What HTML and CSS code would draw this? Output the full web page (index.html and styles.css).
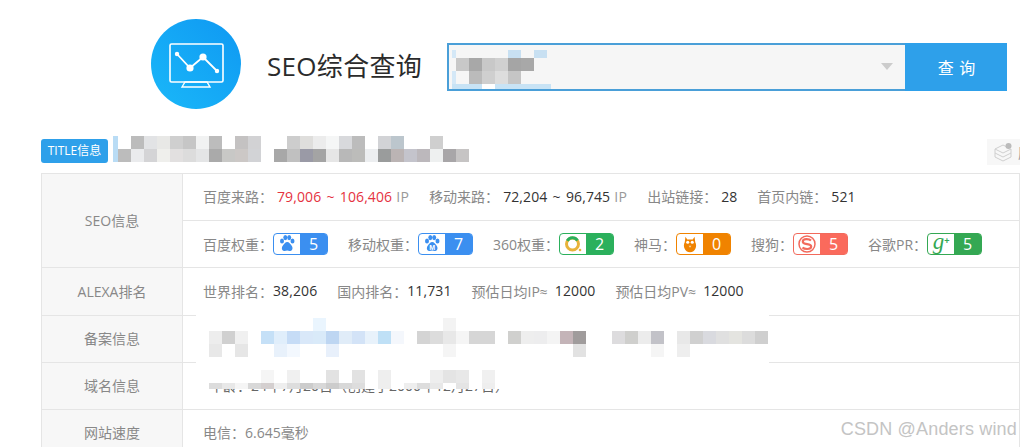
FILE: index.html
```html
<!DOCTYPE html>
<html lang="zh-CN">
<head>
<meta charset="utf-8">
<title>SEO综合查询</title>
<link rel="stylesheet" href="styles.css">
</head>
<body>
<div class="page">
  <header class="head">
    <svg class="logo" width="90" height="90" viewBox="151 19 90 90">
      <defs>
        <linearGradient id="lg" x1="0" y1="1" x2="1" y2="0">
          <stop offset="0" stop-color="#1ab8f9"/>
          <stop offset="1" stop-color="#0f98f2"/>
        </linearGradient>
      </defs>
      <circle cx="196" cy="64" r="45" fill="url(#lg)"/>
      <rect x="170" y="44" width="53" height="38" rx="1.5" fill="none" stroke="#fff" stroke-width="1.6"/>
      <path d="M182 87l3-5h22l3 5z" fill="none" stroke="#fff" stroke-width="1.4"/>
      <path d="M177 54l13 14 13-11 14 14" fill="none" stroke="#fff" stroke-width="1.8"/>
      <circle cx="177" cy="54" r="2.2" fill="#fff"/>
      <circle cx="190" cy="68" r="3.6" fill="#fff"/>
      <circle cx="203" cy="57" r="3.6" fill="#fff"/>
      <circle cx="217" cy="71" r="2.2" fill="#fff"/>
    </svg>
    <h1 class="brand">SEO综合查询</h1>
    <div class="search">
      <div class="search-input"><span class="caret"></span></div>
      <div class="search-btn">查 询</div>
    </div>
  </header>

  <div class="title-row">
    <span class="title-tag">TITLE信息</span>
    <div class="history">
      <svg width="20" height="20" viewBox="0 0 20 20" fill="none" stroke="#cfcfcf" stroke-width="1">
        <path d="M2 7l8-4 6 3M2 7l8 4 8-4M2 11l8 4 8-4M2 15l8 4 8-4M2 7v8M18 7v8"/>
        <circle cx="15.5" cy="4" r="3" fill="#bbb" stroke="none"/>
      </svg>
      <span class="history-text">历史查询</span>
    </div>
  </div>

  <table class="info">
    <colgroup><col class="col-label"><col></colgroup>
    <tr class="r47">
      <th rowspan="2">SEO信息</th>
      <td>
        <div class="line lift">
          <span class="item"><span class="k">百度来路：</span><b class="red">79,006 ~ 106,406</b><span class="ip">IP</span></span>
          <span class="item"><span class="k">移动来路：</span><b>72,204 ~ 96,745</b><span class="ip">IP</span></span>
          <span class="item"><span class="k">出站链接：</span><b>28</b></span>
          <span class="item"><span class="k">首页内链：</span><b>521</b></span>
        </div>
      </td>
    </tr>
    <tr class="r47">
      <td>
        <div class="line">
          <span class="item"><span class="k2">百度权重：</span>
            <span class="rank baidu wide"><span class="ico">
              <svg width="20" height="20" viewBox="0 0 20 20"><g fill="#3b8ff0"><ellipse cx="5" cy="7" rx="2" ry="2.6"/><ellipse cx="8.3" cy="3.6" rx="2" ry="2.6"/><ellipse cx="12.2" cy="3.6" rx="2" ry="2.6"/><ellipse cx="15.5" cy="7" rx="2" ry="2.6"/><path d="M10.2 8c-2 0-3 2-4.300 3.500-1.500 1.800-1.500 5 1.300 5.500 1.200.2 2-.4 3-.4s1.800.6 3 .4c2.800-.5 2.800-3.700 1.300-5.500C13.200 10 12.200 8 10.200 8z"/></g></svg>
            </span><span class="num">5</span></span>
          </span>
          <span class="item"><span class="k2">移动权重：</span>
            <span class="rank baidu wide"><span class="ico">
              <svg width="20" height="20" viewBox="0 0 20 20"><g fill="#3b8ff0"><ellipse cx="5" cy="7" rx="2" ry="2.6"/><ellipse cx="8.3" cy="3.6" rx="2" ry="2.6"/><ellipse cx="12.2" cy="3.6" rx="2" ry="2.6"/><ellipse cx="15.5" cy="7" rx="2" ry="2.6"/><path d="M10.2 8c-2 0-3 2-4.300 3.500-1.500 1.800-1.500 5 1.300 5.500 1.200.2 2-.4 3-.4s1.800.6 3 .4c2.800-.5 2.800-3.700 1.300-5.500C13.200 10 12.200 8 10.200 8z"/></g><text x="10.200" y="15.500" class="m-mark">M</text></svg>
            </span><span class="num">7</span></span>
          </span>
          <span class="item"><span class="k2">360权重：</span>
            <span class="rank s360"><span class="ico">
              <svg width="20" height="20" viewBox="0 0 20 20"><circle cx="9.500" cy="10" r="6" fill="none" stroke="#e8b33a" stroke-width="3"/><path d="M4.300 6.800A6 6 0 0 1 14.500 6.500" fill="none" stroke="#2bb05c" stroke-width="3"/><circle cx="17" cy="16" r="1.300" fill="#e8b33a"/></svg>
            </span><span class="num">2</span></span>
          </span>
          <span class="item"><span class="k2">神马：</span>
            <span class="rank shenma"><span class="ico">
              <svg width="20" height="20" viewBox="0 0 20 22"><path d="M5 3l2 3h6l2-3 .8 6c1.200 2 1.200 5 .2 7-1 2.500-3 4-6 4s-5-1.500-6-4c-1-2-1-5 .2-7z" fill="#f08300"/><circle cx="7.500" cy="9" r="1.700" fill="#fff"/><circle cx="12.500" cy="9" r="1.700" fill="#fff"/><path d="M8.500 13h3l-1.500 2z" fill="#fbd9a8"/></svg>
            </span><span class="num">0</span></span>
          </span>
          <span class="item"><span class="k2">搜狗：</span>
            <span class="rank sogou"><span class="ico">
              <svg width="20" height="20" viewBox="0 0 20 20" fill="none" stroke="#f26a5c"><circle cx="10" cy="10" r="8" stroke-width="1.500"/><path d="M14 6.500c-1-1-2.500-1.300-4.500-1.300-2.300 0-3.700 1-3.700 2.500 0 3.500 8.400 1.500 8.400 4.800 0 1.600-1.500 2.500-4 2.500-2 0-3.800-.5-4.700-1.500" stroke-width="2.200"/></svg>
            </span><span class="num">5</span></span>
          </span>
          <span class="item"><span class="k2">谷歌PR：</span>
            <span class="rank google"><span class="ico"><span class="gplus">g</span><span class="gplus-mark">+</span></span><span class="num">5</span></span>
          </span>
        </div>
      </td>
    </tr>
    <tr class="r48">
      <th>ALEXA排名</th>
      <td>
        <div class="line lift">
          <span class="item"><span class="k2">世界排名：</span><b>38,206</b></span>
          <span class="item"><span class="k2">国内排名：</span><b>11,731</b></span>
          <span class="item"><span class="k3">预估日均IP≈</span><b>12000</b></span>
          <span class="item"><span class="k3">预估日均PV≈</span><b>12000</b></span>
        </div>
      </td>
    </tr>
    <tr class="r47">
      <th>备案信息</th>
      <td></td>
    </tr>
    <tr class="r47">
      <th>域名信息</th>
      <td><div class="line lift age">年龄：24年7月20日（创建于2000年12月27日）</div></td>
    </tr>
    <tr class="r47">
      <th>网站速度</th>
      <td><div class="line lift">电信：6.645毫秒</div></td>
    </tr>
  </table>

  <svg class="mosaic" width="1020" height="447" viewBox="0 0 1020 447" shape-rendering="crispEdges">
    <rect x="452" y="50" width="4" height="8" fill="#d4e8f7"/>
    <rect x="508" y="50" width="13" height="8" fill="#c8e0f2"/>
    <rect x="534" y="50" width="13" height="8" fill="#c8e0f2"/>
    <rect x="456" y="58" width="13" height="13" fill="#c8c8c8"/>
    <rect x="469" y="58" width="13" height="13" fill="#a8a8a8"/>
    <rect x="482" y="58" width="13" height="13" fill="#c8c8c8"/>
    <rect x="495" y="58" width="13" height="13" fill="#d0d0d0"/>
    <rect x="508" y="58" width="13" height="13" fill="#a5a5a5"/>
    <rect x="521" y="58" width="13" height="13" fill="#a8a8a8"/>
    <rect x="452" y="71" width="4" height="13" fill="#d4e8f7"/>
    <rect x="469" y="71" width="13" height="13" fill="#bbbbbb"/>
    <rect x="482" y="71" width="13" height="13" fill="#cfcfcf"/>
    <rect x="495" y="71" width="13" height="13" fill="#dddddd"/>
    <rect x="508" y="71" width="13" height="13" fill="#c5c5c5"/>
    <rect x="452" y="84" width="30" height="5" fill="#c8e3f5"/>
    <rect x="482" y="84" width="13" height="5" fill="#ffffff"/>
    <rect x="495" y="84" width="56" height="5" fill="#c8e3f5"/>

    <rect x="113" y="136" width="5" height="26" fill="#b9dcf5"/>
    <rect x="131" y="136" width="13" height="13" fill="#bcbcbc"/>
    <rect x="144" y="136" width="13" height="13" fill="#e2e3e5"/>
    <rect x="157" y="136" width="13" height="13" fill="#e8e8e6"/>
    <rect x="170" y="136" width="13" height="13" fill="#cfcfcf"/>
    <rect x="183" y="136" width="13" height="13" fill="#c6c6c6"/>
    <rect x="196" y="136" width="13" height="13" fill="#f1f2f2"/>
    <rect x="209" y="136" width="13" height="13" fill="#bcbcbc"/>
    <rect x="235" y="136" width="13" height="13" fill="#c4c2c2"/>
    <rect x="248" y="136" width="13" height="13" fill="#d2d2d4"/>
    <rect x="118" y="149" width="13" height="13" fill="#bcbcbc"/>
    <rect x="131" y="149" width="13" height="13" fill="#eaebed"/>
    <rect x="144" y="149" width="13" height="13" fill="#d4d4d6"/>
    <rect x="157" y="149" width="13" height="13" fill="#efefec"/>
    <rect x="170" y="149" width="13" height="13" fill="#e2e0e0"/>
    <rect x="183" y="149" width="13" height="13" fill="#dcdcdc"/>
    <rect x="196" y="149" width="13" height="13" fill="#e4e5e6"/>
    <rect x="209" y="149" width="13" height="13" fill="#aaaaaa"/>
    <rect x="222" y="149" width="13" height="13" fill="#c8c8c6"/>
    <rect x="235" y="149" width="13" height="13" fill="#ccc8c6"/>
    <rect x="248" y="149" width="13" height="13" fill="#d2d3d6"/>
    <rect x="287" y="136" width="13" height="13" fill="#cdcdcd"/>
    <rect x="300" y="136" width="13" height="13" fill="#dfdedc"/>
    <rect x="313" y="136" width="13" height="13" fill="#ececec"/>
    <rect x="326" y="136" width="13" height="13" fill="#f5f6f6"/>
    <rect x="339" y="136" width="13" height="13" fill="#d8d9dc"/>
    <rect x="352" y="136" width="13" height="13" fill="#bcbcbc"/>
    <rect x="378" y="136" width="13" height="13" fill="#d2d3d6"/>
    <rect x="391" y="136" width="13" height="13" fill="#bcc6cd"/>
    <rect x="430" y="136" width="13" height="13" fill="#cfcfcf"/>
    <rect x="274" y="149" width="13" height="13" fill="#a8a8a8"/>
    <rect x="287" y="149" width="13" height="13" fill="#c0c0c0"/>
    <rect x="300" y="149" width="13" height="13" fill="#9a9aa6"/>
    <rect x="313" y="149" width="13" height="13" fill="#a4a4a4"/>
    <rect x="326" y="149" width="13" height="13" fill="#e6e6e6"/>
    <rect x="339" y="149" width="13" height="13" fill="#b8b8b8"/>
    <rect x="352" y="149" width="13" height="13" fill="#bcbcba"/>
    <rect x="365" y="149" width="13" height="13" fill="#eceef0"/>
    <rect x="378" y="149" width="13" height="13" fill="#9a9c9c"/>
    <rect x="391" y="149" width="13" height="13" fill="#bbb4b4"/>
    <rect x="404" y="149" width="13" height="13" fill="#c4c4cc"/>
    <rect x="417" y="149" width="13" height="13" fill="#bcb8bc"/>
    <rect x="430" y="149" width="13" height="13" fill="#eef0f0"/>
    <rect x="443" y="149" width="13" height="13" fill="#a8a6a8"/>
    <rect x="456" y="149" width="13" height="13" fill="#c6c4c4"/>

    <rect x="196" y="314" width="573" height="75" fill="#ffffff"/>
    <rect x="313" y="318" width="13" height="13" fill="#eaf5fe"/>
    <rect x="443" y="318" width="13" height="13" fill="#f3f3f3"/>
    <rect x="209" y="331" width="13" height="13" fill="#ededed"/>
    <rect x="222" y="331" width="13" height="13" fill="#d0d0d0"/>
    <rect x="235" y="331" width="13" height="13" fill="#f0f0f0"/>
    <rect x="261" y="331" width="13" height="13" fill="#c5e0f7"/>
    <rect x="274" y="331" width="13" height="13" fill="#e0eefb"/>
    <rect x="287" y="331" width="13" height="13" fill="#c6dcf6"/>
    <rect x="300" y="331" width="13" height="13" fill="#d9e8f9"/>
    <rect x="313" y="331" width="13" height="13" fill="#d9eaf9"/>
    <rect x="326" y="331" width="13" height="13" fill="#bed6f2"/>
    <rect x="339" y="331" width="13" height="13" fill="#e0ecf8"/>
    <rect x="352" y="331" width="13" height="13" fill="#d3e3f7"/>
    <rect x="365" y="331" width="13" height="13" fill="#e8f2fb"/>
    <rect x="378" y="331" width="13" height="13" fill="#bfe0f6"/>
    <rect x="391" y="331" width="13" height="13" fill="#f4f7fc"/>
    <rect x="417" y="331" width="13" height="13" fill="#d4d4d4"/>
    <rect x="430" y="331" width="13" height="13" fill="#dcdcdc"/>
    <rect x="443" y="331" width="13" height="13" fill="#e8e8e8"/>
    <rect x="456" y="331" width="13" height="13" fill="#f5f5f5"/>
    <rect x="469" y="331" width="13" height="13" fill="#d6d6d6"/>
    <rect x="482" y="331" width="13" height="13" fill="#d6d6d6"/>
    <rect x="508" y="331" width="13" height="13" fill="#d0d0ce"/>
    <rect x="521" y="331" width="13" height="13" fill="#eeeeee"/>
    <rect x="534" y="331" width="13" height="13" fill="#ededee"/>
    <rect x="547" y="331" width="13" height="13" fill="#f4f4f4"/>
    <rect x="560" y="331" width="13" height="13" fill="#c4b4b8"/>
    <rect x="573" y="331" width="13" height="13" fill="#a09c9c"/>
    <rect x="612" y="331" width="13" height="13" fill="#dddcde"/>
    <rect x="625" y="331" width="13" height="13" fill="#cfcfcd"/>
    <rect x="638" y="331" width="13" height="13" fill="#ececec"/>
    <rect x="651" y="331" width="13" height="13" fill="#c2c2c8"/>
    <rect x="677" y="331" width="13" height="13" fill="#e8e8e8"/>
    <rect x="690" y="331" width="13" height="13" fill="#d0d0d0"/>
    <rect x="703" y="331" width="13" height="13" fill="#d9dadf"/>
    <rect x="716" y="331" width="13" height="13" fill="#e0e0e0"/>
    <rect x="729" y="331" width="13" height="13" fill="#e4e4e0"/>
    <rect x="742" y="331" width="13" height="13" fill="#dcdcdc"/>
    <rect x="755" y="331" width="13" height="13" fill="#cfcfcf"/>
    <rect x="209" y="344" width="13" height="13" fill="#e8e8e8"/>
    <rect x="235" y="344" width="13" height="13" fill="#e6e6e6"/>
    <rect x="274" y="344" width="13" height="13" fill="#e8f1fb"/>
    <rect x="287" y="344" width="13" height="13" fill="#f3f8fe"/>
    <rect x="326" y="344" width="13" height="13" fill="#e8f0fb"/>
    <rect x="443" y="344" width="13" height="13" fill="#f5f5f5"/>
    <rect x="573" y="344" width="13" height="13" fill="#e2e2e2"/>
    <rect x="651" y="344" width="13" height="13" fill="#f5f5f5"/>
    <rect x="677" y="344" width="13" height="13" fill="#eeeeee"/>
    <rect x="261" y="370" width="13" height="13" fill="#f5f5f5"/>
    <rect x="287" y="370" width="13" height="13" fill="#f0f0f0"/>
    <rect x="326" y="370" width="13" height="13" fill="#e2e2e2"/>
    <rect x="352" y="370" width="13" height="13" fill="#e2e2e2"/>
    <rect x="378" y="370" width="13" height="13" fill="#eeeeee"/>
    <rect x="430" y="370" width="13" height="13" fill="#eeeeee"/>
    <rect x="443" y="370" width="13" height="13" fill="#e4e4e4"/>
    <rect x="456" y="370" width="13" height="13" fill="#e8e8e8"/>
    <rect x="482" y="370" width="13" height="13" fill="#f0f0f0"/>
    <rect x="209" y="383" width="13" height="6" fill="#dcdcdc"/>
    <rect x="222" y="383" width="13" height="6" fill="#e8e8e8"/>
    <rect x="235" y="383" width="13" height="6" fill="#f5f5f5"/>
    <rect x="248" y="383" width="13" height="6" fill="#d8d8d8"/>
    <rect x="261" y="383" width="13" height="6" fill="#d4cfcf"/>
    <rect x="274" y="383" width="13" height="6" fill="#eeeeee"/>
    <rect x="287" y="383" width="13" height="6" fill="#dddddd"/>
    <rect x="300" y="383" width="13" height="6" fill="#cccccc"/>
    <rect x="313" y="383" width="13" height="6" fill="#d8d8d8"/>
    <rect x="326" y="383" width="13" height="6" fill="#cccccc"/>
    <rect x="339" y="383" width="13" height="6" fill="#d8d8d8"/>
    <rect x="352" y="383" width="13" height="6" fill="#dddddd"/>
    <rect x="378" y="383" width="13" height="6" fill="#eeeeee"/>
    <rect x="404" y="383" width="13" height="6" fill="#eeeeee"/>
    <rect x="417" y="383" width="13" height="6" fill="#dddddd"/>
    <rect x="430" y="383" width="13" height="6" fill="#e8e8e8"/>
    <rect x="456" y="383" width="13" height="6" fill="#e4e4e4"/>
    <rect x="482" y="383" width="13" height="6" fill="#eeeeee"/>
  </svg>

  <div class="watermark">CSDN @Anders wind</div>
</div>
</body>
</html>
```

FILE: styles.css
```css
html, body {
  margin: 0;
  padding: 0;
  background: #fff;
  overflow: hidden;
}
.page {
  position: relative;
  width: 1020px;
  height: 447px;
  overflow: hidden;
  font-family: "Open Sans", "Noto Sans CJK SC", sans-serif;
  font-size: 14px;
  color: #888;
}
.head {
  display: flex;
  align-items: flex-start;
  height: 139px;
  padding: 19px 0 0 151px;
  box-sizing: border-box;
}
.logo { display: block; flex: none; }
.brand {
  margin: 24px 26px 0 26px;
  width: 154px;
  font-size: 26px;
  font-weight: 400;
  line-height: 46px;
  letter-spacing: 0.3px;
  color: #2b2b2b;
  white-space: nowrap;
}
.search {
  display: flex;
  flex: none;
  width: 560px;
  height: 48px;
  margin-top: 24px;
}
.search-input {
  position: relative;
  flex: 1;
  background: #f6f6f6;
  border: 2px solid #4a9fd8;
  border-right: 0;
}
.caret {
  position: absolute;
  right: 12px;
  top: 18px;
  width: 0;
  height: 0;
  border-left: 6px solid transparent;
  border-right: 6px solid transparent;
  border-top: 7px solid #cccccc;
}
.search-btn {
  flex: none;
  box-sizing: border-box;
  width: 102px;
  padding-left: 2px;
  background: #2ea0ea;
  color: #fff;
  font-family: "Noto Sans CJK SC", sans-serif;
  font-size: 16px;
  line-height: 48px;
  text-align: center;
  letter-spacing: 1px;
}
.title-row {
  display: flex;
  align-items: flex-start;
  height: 34px;
  padding-left: 41px;
}
.title-tag {
  width: 67px;
  height: 24px;
  background: #2ea0ea;
  border-radius: 3px;
  color: #fff;
  font-size: 12px;
  line-height: 24px;
  text-align: center;
  white-space: nowrap;
}
.history {
  display: flex;
  align-items: center;
  gap: 5px;
  width: 33px;
  height: 26px;
  margin-left: auto;
  padding-left: 6px;
  box-sizing: border-box;
  background: #f7f7f7;
  overflow: hidden;
}
.history svg { flex: none; }
.history-text { flex: none; color: #999; white-space: nowrap; }
.info {
  width: 979px;
  margin-left: 41px;
  table-layout: fixed;
  border-collapse: collapse;
}
.col-label { width: 141px; }
.info th, .info td {
  border: 1px solid #e5e5e5;
  padding: 0;
  font-weight: 400;
}
.info th {
  padding-bottom: 2px;
  background: #f7f7f7;
  color: #888;
  text-align: center;
}
.info td { padding-left: 20px; }
.r47 { height: 47px; }
.r48 { height: 48px; }
.line {
  display: flex;
  align-items: center;
  gap: 20px;
  white-space: nowrap;
}
.lift { margin-bottom: 2px; }
.age { color: #666; margin-left: 6px; }
.item {
  display: flex;
  align-items: center;
  color: #888;
}
.item b {
  font-weight: 400;
  color: #333;
  word-spacing: 1.5px;
  letter-spacing: 0.1px;
}
.ip { margin-left: 4px; color: #999; letter-spacing: 0.3px; }
.k { margin-right: 4px; }
.k2 { margin-right: 0; }
.k3 { margin-right: 7px; }
.item b.red { color: #e5333f; }
.rank {
  display: inline-flex;
  align-items: stretch;
  box-sizing: border-box;
  width: 55px;
  height: 22px;
  border: 1px solid;
  border-radius: 4px;
  background: #fff;
}
.ico {
  display: flex;
  align-items: center;
  justify-content: center;
  width: 26px;
  flex: none;
  position: relative;
}
.num {
  flex: 1;
  color: #fff;
  font-size: 16px;
  line-height: 20px;
  text-align: center;
  border-radius: 0 2px 2px 0;
}
.baidu { border-color: #3b8ff0; }
.baidu .num { background: #3b8ff0; }
.s360 { border-color: #2bb05c; }
.s360 .num { background: #2bb05c; }
.shenma { border-color: #f08300; }
.shenma .num { background: #f08300; }
.sogou { border-color: #f26a5c; }
.sogou .num { background: #fa6a5c; }
.google { border-color: #34a853; }
.google .num { background: #34a853; }
.m-mark {
  font-family: "Liberation Sans", sans-serif;
  font-size: 7px;
  font-weight: 700;
  fill: #fff;
  text-anchor: middle;
}
.gplus {
  font-family: "Liberation Serif", serif;
  font-style: italic;
  font-size: 23px;
  line-height: 20px;
  color: #34a853;
  margin-top: -5px;
}
.gplus-mark {
  font-family: "Liberation Sans", sans-serif;
  font-weight: 700;
  font-size: 9px;
  line-height: 10px;
  color: #34a853;
  margin-top: -6px;
}
.mosaic {
  position: absolute;
  left: 0;
  top: 0;
  pointer-events: none;
}
.watermark {
  position: absolute;
  right: 3px;
  top: 419px;
  font-family: "Liberation Sans", sans-serif;
  font-size: 18px;
  letter-spacing: 0.17px;
  color: #c4c4c4;
  white-space: nowrap;
}
```
